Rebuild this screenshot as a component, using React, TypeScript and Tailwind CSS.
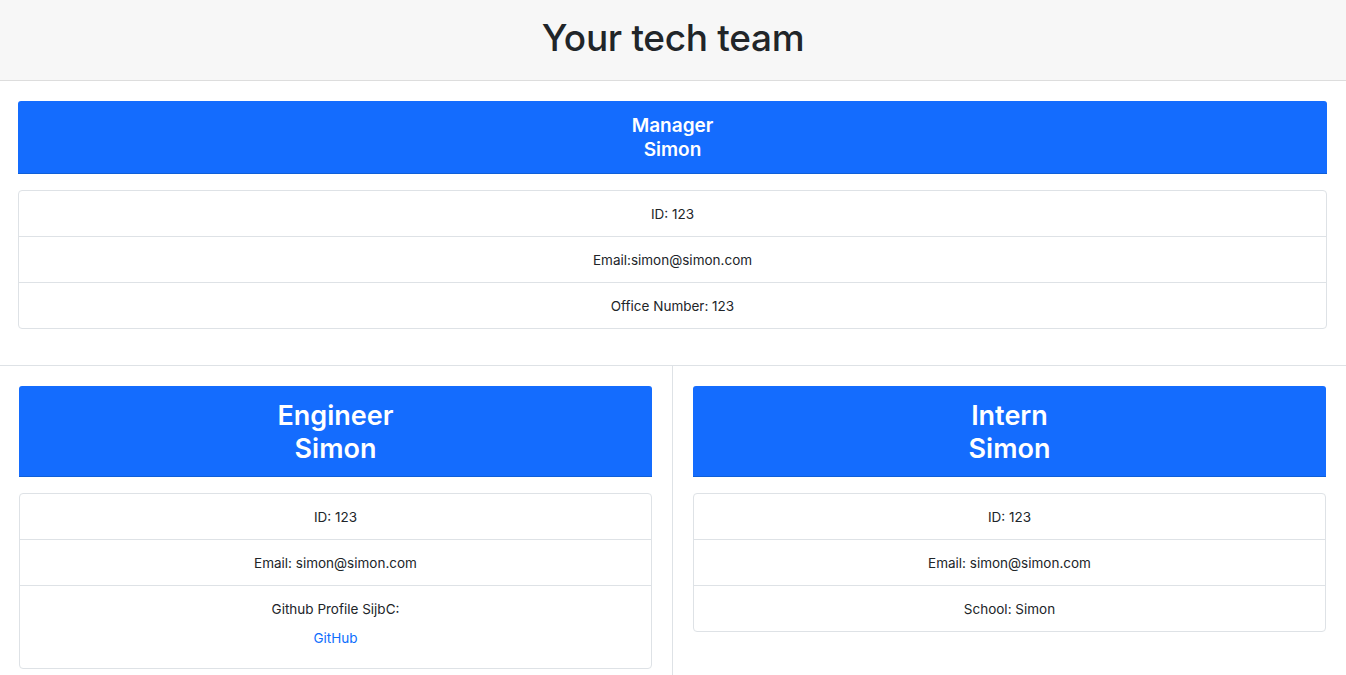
import React from "react";

function CardHeader({ role, name, big }: { role: string; name: string; big?: boolean }) {
  return (
    <div
      className={
        "bg-[#146cfe] text-white text-center font-semibold rounded-t-[3px] border-b border-[#0f5fd8] " +
        (big ? "text-[27px] leading-[33px] pt-[13px] pb-[11px]" : "text-[19px] leading-[24px] pt-[13px] pb-[11px]")
      }
    >
      <div>{role}</div>
      <div>{name}</div>
    </div>
  );
}

function InfoList({ children }: { children: React.ReactNode }) {
  return (
    <ul className="mt-4 border border-[#dee2e6] rounded-[4px] text-[13.5px] leading-[21px] text-[#212529] text-center">
      {children}
    </ul>
  );
}

function Item({ children, last }: { children: React.ReactNode; last?: boolean }) {
  return <li className={"pt-[13px] pb-[11px] px-4 " + (last ? "" : "border-b border-[#dee2e6]")}>{children}</li>;
}

export default function App() {
  return (
    <div className="min-h-screen bg-white font-['Inter','Liberation_Sans',sans-serif]">
      <header className="h-[81px] bg-[#f7f7f7] border-b border-[#dddddd] flex items-center justify-center">
        <h1 className="text-[37px] font-medium text-[#212529] tracking-[-0.3px] -mt-[4px]">Your tech team</h1>
      </header>

      <section className="pt-5 pb-9 pl-[18px] pr-[19px] border-b border-[#dee2e6]">
        <CardHeader role="Manager" name="Simon" />
        <InfoList>
          <Item>ID: 123</Item>
          <Item>Email:simon@simon.com</Item>
          <Item last>Office Number: 123</Item>
        </InfoList>
      </section>

      <section className="grid grid-cols-2">
        <div className="pt-5 pb-6 pl-[19px] pr-5 border-r border-[#dee2e6]">
          <CardHeader role="Engineer" name="Simon" big />
          <InfoList>
            <Item>ID: 123</Item>
            <Item>Email: simon@simon.com</Item>
            <li className="pt-[13px] pb-[11px] px-4">
              <p className="mb-2">Github Profile SijbC:</p>
              <p className="mb-2">
                <a href="#" className="text-[#0d6efd]">GitHub</a>
              </p>
            </li>
          </InfoList>
        </div>
        <div className="pt-5 pb-6 pl-5 pr-5">
          <CardHeader role="Intern" name="Simon" big />
          <InfoList>
            <Item>ID: 123</Item>
            <Item>Email: simon@simon.com</Item>
            <Item last>School: Simon</Item>
          </InfoList>
        </div>
      </section>
    </div>
  );
}
